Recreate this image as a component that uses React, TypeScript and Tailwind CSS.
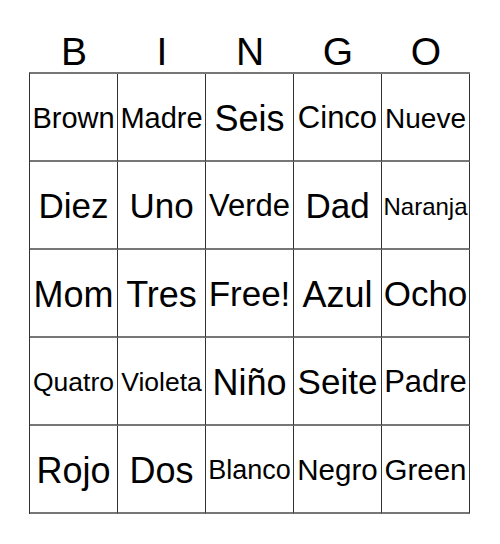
import React from 'react';

interface Cell {
  word: string;
  size: string;
}

const letters = ['B', 'I', 'N', 'G', 'O'];

// sizes shrink so each word fits the 88px square
const rows: Cell[][] = [
  [
    { word: 'Brown', size: 'text-[29px]' },
    { word: 'Madre', size: 'text-[29px]' },
    { word: 'Seis', size: 'text-[36px]' },
    { word: 'Cinco', size: 'text-[31px]' },
    { word: 'Nueve', size: 'text-[28px]' },
  ],
  [
    { word: 'Diez', size: 'text-[35px]' },
    { word: 'Uno', size: 'text-[35px]' },
    { word: 'Verde', size: 'text-[31px]' },
    { word: 'Dad', size: 'text-[35px]' },
    { word: 'Naranja', size: 'text-[24px]' },
  ],
  [
    { word: 'Mom', size: 'text-[36px]' },
    { word: 'Tres', size: 'text-[36px]' },
    { word: 'Free!', size: 'text-[35px]' },
    { word: 'Azul', size: 'text-[36px]' },
    { word: 'Ocho', size: 'text-[35px]' },
  ],
  [
    { word: 'Quatro', size: 'text-[26.5px]' },
    { word: 'Violeta', size: 'text-[26.5px]' },
    { word: 'Niño', size: 'text-[36px]' },
    { word: 'Seite', size: 'text-[35px]' },
    { word: 'Padre', size: 'text-[31px]' },
  ],
  [
    { word: 'Rojo', size: 'text-[36px]' },
    { word: 'Dos', size: 'text-[36px]' },
    { word: 'Blanco', size: 'text-[27px]' },
    { word: 'Negro', size: 'text-[29.5px]' },
    { word: 'Green', size: 'text-[29.5px]' },
  ],
];

export default function App() {
  return (
    <div className="w-[500px] h-[544px] bg-white text-black font-['Liberation_Sans',Arial,sans-serif]">
      {/* Header */}
      <div className="ml-[29px] h-[72px] pt-[32px] grid grid-cols-[repeat(5,88px)] pl-px">
        {letters.map(l => (
          <div key={l} className="text-center text-[39px] leading-[39px]">
            {l}
          </div>
        ))}
      </div>

      {/* Card */}
      <div className="ml-[29px] w-[441px] border-l border-t-2 border-l-[#333] border-t-[#777] grid grid-cols-[repeat(5,88px)]">
        {rows.flat().map((cell, i) => (
          <div
            key={i}
            className="h-[88px] pt-[3px] border-r border-b-2 border-r-[#333] border-b-[#777] flex items-center justify-center overflow-hidden whitespace-nowrap"
          >
            <span className={cell.size}>{cell.word}</span>
          </div>
        ))}
      </div>
    </div>
  );
}
